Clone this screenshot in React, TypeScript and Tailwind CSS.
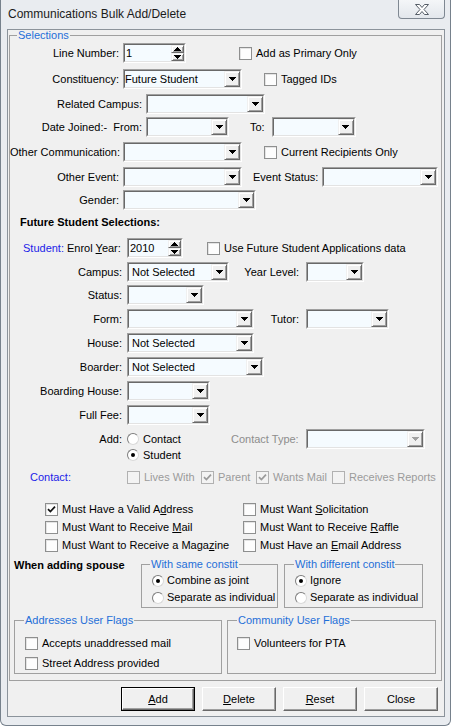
import React from "react";

type Kids = { children?: React.ReactNode };

const Arrow = ({ up, color = "#000" }: { up?: boolean; color?: string }) => (
  <svg width="7" height="4" viewBox="0 0 7 4" shapeRendering="crispEdges">
    <path
      d={up ? "M3 0h1v1h1v1h1v1h1v1h-7v-1h1v-1h1v-1h1z" : "M0 0h7v1h-1v1h-1v1h-1v1h-1v-1h-1v-1h-1v-1h-1z"}
      fill={color}
    />
  </svg>
);

const raised =
  "bg-[#f0f0f0] border border-[#f0f0f0] border-r-[#696969] border-b-[#696969] shadow-[inset_1px_1px_0_#fff,inset_-1px_-1px_0_#a0a0a0]";

function Combo({ w, value, pad = "pl-[3px]", disabled }: { w: string; value?: string; pad?: string; disabled?: boolean }) {
  return (
    <div className={`${w} h-[20px] shrink-0 flex border border-[#a0a0a0] border-r-white border-b-white`}>
      <div className="flex-1 flex min-w-0 border border-[#696969] border-r-[#e3e3e3] border-b-[#e3e3e3] bg-[#f5fbff]">
        <span className={`flex-1 ${pad} leading-[16px] whitespace-nowrap overflow-hidden`}>{value}</span>
        <div className={`w-[16px] h-full flex items-center justify-center ${raised}`}>
          <Arrow color={disabled ? "#a0a0a0" : "#000"} />
        </div>
      </div>
    </div>
  );
}

function Spin({ w, value, pad }: { w: string; value: string; pad: string }) {
  return (
    <div className={`${w} h-[20px] shrink-0 flex border border-[#a0a0a0] border-r-white border-b-white`}>
      <div className="flex-1 flex border border-[#696969] border-r-[#e3e3e3] border-b-[#e3e3e3] bg-[#f5fbff]">
        <span className={`flex-1 ${pad} leading-[16px]`}>{value}</span>
        <div className="w-[13px] flex flex-col">
          <div className={`h-[8px] flex items-center justify-center ${raised}`}>
            <Arrow up />
          </div>
          <div className={`h-[8px] flex items-center justify-center ${raised}`}>
            <Arrow />
          </div>
        </div>
      </div>
    </div>
  );
}

function Check({ checked, disabled }: { checked?: boolean; disabled?: boolean }) {
  return (
    <span
      className={`w-[13px] h-[13px] shrink-0 flex items-center justify-center border ${
        disabled ? "border-[#b1b1b1] bg-[#f3f3f3]" : "border-[#8e8f8f] bg-[#fdfdfd] shadow-[inset_1px_1px_0_#e4e4e4]"
      }`}
    >
      {checked && (
        <svg width="9" height="9" viewBox="0 0 9 9">
          <path d="M1 4.2l2.4 2.4L8 1.6" fill="none" stroke={disabled ? "#9a9a9a" : "#111"} strokeWidth="1.7" />
        </svg>
      )}
    </span>
  );
}

function CheckText({ checked, disabled, className = "", children }: Kids & { checked?: boolean; disabled?: boolean; className?: string }) {
  return (
    <label className={`flex items-center shrink-0 ${className}`}>
      <Check checked={checked} disabled={disabled} />
      <span className={`ml-[4px] whitespace-nowrap ${disabled ? "text-[#9b9b9b]" : ""}`}>{children}</span>
    </label>
  );
}

function Radio({ checked }: { checked?: boolean }) {
  return (
    <span className="w-[12px] h-[12px] shrink-0 rounded-full border border-[#7d7d7d] border-r-[#d9d9d9] border-b-[#d9d9d9] bg-white flex items-center justify-center">
      {checked && <span className="w-[4px] h-[4px] rounded-full bg-black" />}
    </span>
  );
}

function RadioText({ checked, className = "", gap = "ml-[4px]", children }: Kids & { checked?: boolean; className?: string; gap?: string }) {
  return (
    <label className={`flex items-center ${className}`}>
      <Radio checked={checked} />
      <span className={`${gap} whitespace-nowrap`}>{children}</span>
    </label>
  );
}

function Btn({ children, isDefault }: Kids & { isDefault?: boolean }) {
  const face = (
    <div className="h-full flex items-center justify-center bg-[#f0f0f0] border border-white border-r-[#696969] border-b-[#696969] shadow-[inset_-1px_-1px_0_#a0a0a0]">
      {children}
    </div>
  );
  return isDefault ? (
    <div className="w-[74px] h-[24px] border border-black">{face}</div>
  ) : (
    <div className="w-[74px] h-[24px]">{face}</div>
  );
}

const Legend = ({ className = "", children }: Kids & { className?: string }) => (
  <legend className={`px-[1px] pt-[1px] leading-[9px] text-[#1f6fd8] ${className}`}>{children}</legend>
);

export default function App() {
  return (
    <div className="w-[451px] h-[726px] overflow-hidden bg-[#e9ecf0] border-x border-b border-[#76818c] rounded-b-[6px] pl-[6px] pr-[5px] font-['Liberation_Sans',Arial,sans-serif] text-[11px] leading-[13px] text-black">
      {/* title bar */}
      <div className="h-[29px] flex justify-between items-start">
        <span className="ml-[1px] mt-[7px] text-[12px] leading-[14px] text-[#1b1b1b]">Communications Bulk Add/Delete</span>
        <div className="w-[47px] h-[19px] rounded-b-[4px] border border-t-0 border-[#7f8892] bg-gradient-to-b from-[#f4f6f8] to-[#e3e7ec] flex items-center justify-center">
          <svg width="14" height="11" viewBox="0 0 14 11">
            <path d="M0.5 0.5h4l2.5 3 2.5-3h4L9 5.5l4.5 5h-4L7 7.5l-2.5 3h-4L5 5.5z" fill="#fff" stroke="#555d66" strokeWidth="1" />
          </svg>
        </div>
      </div>

      {/* client area */}
      <div className="border border-[#8b939b] bg-[#f0f0f0]">
        <fieldset className="ml-[1px] mr-[2px] border border-[#a0a0a0] pb-[6px]">
          <Legend className="ml-[7px]">Selections</Legend>

          <div className="mt-[3px] h-[20px] flex items-center">
            <span className="w-[109px] mr-[4px] text-right">Line Number:</span>
            <Spin w="w-[63px]" value="1" pad="pl-[1px]" />
            <CheckText className="ml-[53px]">Add as Primary Only</CheckText>
          </div>

          <div className="mt-[6px] h-[20px] flex items-center">
            <span className="w-[109px] mr-[4px] text-right">Constituency:</span>
            <Combo w="w-[119px]" value="Future Student" pad="pl-0" />
            <CheckText className="ml-[22px]">Tagged IDs</CheckText>
          </div>

          <div className="mt-[5px] h-[20px] flex items-center">
            <span className="w-[132px] mr-[4px] text-right">Related Campus:</span>
            <Combo w="w-[119px]" />
          </div>

          <div className="mt-[3px] h-[20px] flex items-center">
            <span className="w-[132px] mr-[4px] text-right whitespace-pre">Date Joined:-  From:</span>
            <Combo w="w-[83px]" />
            <span className="ml-[21px] mr-[7px]">To:</span>
            <Combo w="w-[84px]" />
          </div>

          <div className="mt-[5px] h-[20px] flex items-center">
            <span className="w-[109px] mr-[4px] text-right whitespace-nowrap">Other Communication:</span>
            <Combo w="w-[119px]" />
            <CheckText className="ml-[22px]">Current Recipients Only</CheckText>
          </div>

          <div className="mt-[5px] h-[20px] flex items-center">
            <span className="w-[109px] mr-[4px] text-right">Other Event:</span>
            <Combo w="w-[119px]" />
            <span className="ml-[11px] w-[69px] whitespace-nowrap">Event Status:</span>
            <Combo w="w-[116px]" />
          </div>

          <div className="mt-[3px] h-[20px] flex items-center">
            <span className="w-[109px] mr-[4px] text-right">Gender:</span>
            <Combo w="w-[133px]" />
          </div>

          <div className="mt-[6px] ml-[10px] font-bold">Future Student Selections:</div>

          <div className="mt-[9px] h-[20px] flex items-center">
            <span className="ml-[13px] w-[44px] text-[#1c1ce8]">Student:</span>
            <span className="w-[60px] whitespace-nowrap">
              Enrol <u>Y</u>ear:
            </span>
            <Spin w="w-[56px]" value="2010" pad="pl-[1px]" />
            <CheckText className="ml-[24px]">Use Future Student Applications data</CheckText>
          </div>

          <div className="mt-[4px] h-[20px] flex items-center">
            <span className="w-[112px] mr-[5px] text-right">Campus:</span>
            <Combo w="w-[102px]" value="Not Selected" />
            <span className="w-[70px] mr-[7px] text-right">Year Level:</span>
            <Combo w="w-[58px]" />
          </div>

          <div className="mt-[3px] h-[20px] flex items-center">
            <span className="w-[112px] mr-[5px] text-right">Status:</span>
            <Combo w="w-[77px]" />
          </div>

          <div className="mt-[4px] h-[20px] flex items-center">
            <span className="w-[112px] mr-[5px] text-right">Form:</span>
            <Combo w="w-[127px]" />
            <span className="w-[45px] mr-[7px] text-right">Tutor:</span>
            <Combo w="w-[83px]" />
          </div>

          <div className="mt-[4px] h-[20px] flex items-center">
            <span className="w-[112px] mr-[5px] text-right">House:</span>
            <Combo w="w-[127px]" value="Not Selected" />
          </div>

          <div className="mt-[4px] h-[20px] flex items-center">
            <span className="w-[112px] mr-[5px] text-right">Boarder:</span>
            <Combo w="w-[137px]" value="Not Selected" />
          </div>

          <div className="mt-[4px] h-[20px] flex items-center">
            <span className="w-[112px] mr-[5px] text-right">Boarding House:</span>
            <Combo w="w-[83px]" />
          </div>

          <div className="mt-[4px] h-[20px] flex items-center">
            <span className="w-[112px] mr-[5px] text-right">Full Fee:</span>
            <Combo w="w-[83px]" />
          </div>

          <div className="mt-[4px] flex items-start">
            <span className="w-[112px] mr-[5px] h-[20px] flex items-center justify-end">Add:</span>
            <div className="w-[104px] pt-[2px] flex flex-col">
              <RadioText className="h-[16px]">Contact</RadioText>
              <RadioText className="h-[16px]" checked>
                Student
              </RadioText>
            </div>
            <span className="w-[75px] h-[20px] flex items-center text-[#8d8d8d] whitespace-nowrap">Contact Type:</span>
            <Combo w="w-[119px]" disabled />
          </div>

          <div className="mt-[6px] h-[16px] flex items-center">
            <span className="ml-[20px] w-[97px] text-[#1c1ce8]">Contact:</span>
            <CheckText disabled className="w-[74px]">
              Lives With
            </CheckText>
            <CheckText disabled checked className="w-[55px]">
              Parent
            </CheckText>
            <CheckText disabled checked className="w-[76px]">
              Wants Mail
            </CheckText>
            <CheckText disabled>Receives Reports</CheckText>
          </div>

          <div className="mt-[15px] ml-[35px] grid grid-cols-[198px_1fr] auto-rows-[18px] items-center">
            <CheckText checked>
              Must Have a Valid A<u>d</u>dress
            </CheckText>
            <CheckText>
              Must Want <u>S</u>olicitation
            </CheckText>
            <CheckText>
              Must Want to Receive <u>M</u>ail
            </CheckText>
            <CheckText>
              Must Want to Receive <u>R</u>affle
            </CheckText>
            <CheckText>
              Must Want to Receive a Maga<u>z</u>ine
            </CheckText>
            <CheckText>
              Must Have an <u>E</u>mail Address
            </CheckText>
          </div>

          <div className="mt-[5px] flex items-start">
            <span className="ml-[4px] w-[127px] font-bold whitespace-nowrap">When adding spouse</span>
            <fieldset className="w-[137px] border border-[#a0a0a0] pb-[1px]">
              <Legend className="ml-[8px]">With same constit</Legend>
              <div className="pt-[3px] pl-[10px]">
                <RadioText className="h-[17px]" gap="ml-[3px]" checked>
                  Combine as joint
                </RadioText>
                <RadioText className="h-[17px]" gap="ml-[3px]">
                  Separate as individual
                </RadioText>
              </div>
            </fieldset>
            <fieldset className="ml-[6px] w-[139px] border border-[#a0a0a0] pb-[1px]">
              <Legend className="ml-[9px]">With different constit</Legend>
              <div className="pt-[3px] pl-[10px]">
                <RadioText className="h-[17px]" gap="ml-[3px]" checked>
                  Ignore
                </RadioText>
                <RadioText className="h-[17px]" gap="ml-[3px]">
                  Separate as individual
                </RadioText>
              </div>
            </fieldset>
          </div>

          <div className="mt-[7px] flex">
            <fieldset className="ml-[4px] w-[208px] border border-[#a0a0a0]">
              <Legend className="ml-[9px]">Addresses User Flags</Legend>
              <div className="pt-[8px] pl-[10px]">
                <CheckText className="h-[20px]">Accepts unaddressed mail</CheckText>
                <CheckText className="h-[20px]">Street Address provided</CheckText>
              </div>
            </fieldset>
            <fieldset className="ml-[5px] w-[209px] border border-[#a0a0a0]">
              <Legend className="ml-[9px]">Community User Flags</Legend>
              <div className="pt-[8px] pl-[9px]">
                <CheckText className="h-[20px]">Volunteers for PTA</CheckText>
              </div>
            </fieldset>
          </div>
        </fieldset>

        <div className="mt-[6px] mb-[5px] ml-[113px] flex gap-[7px]">
          <Btn isDefault>
            <u>A</u>dd
          </Btn>
          <Btn>
            <u>D</u>elete
          </Btn>
          <Btn>
            <u>R</u>eset
          </Btn>
          <Btn>Close</Btn>
        </div>
      </div>
    </div>
  );
}
